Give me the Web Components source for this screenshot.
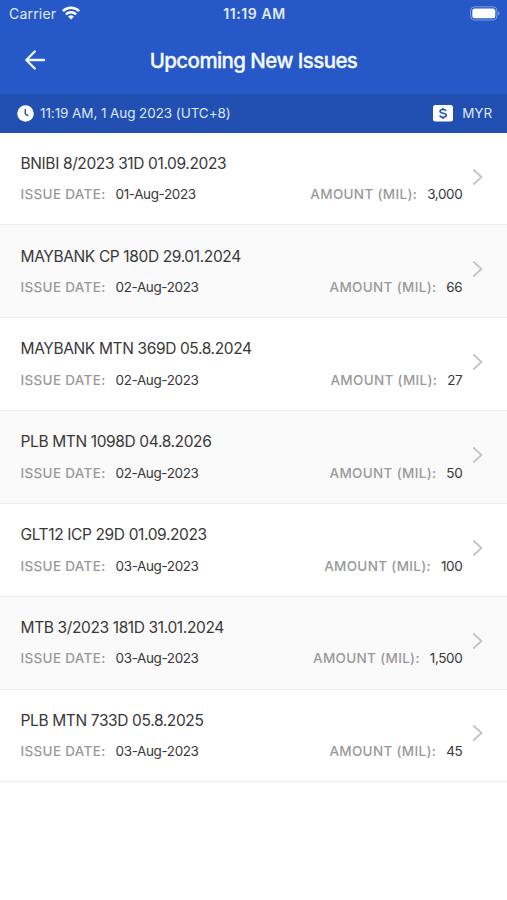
<!DOCTYPE html>
<html lang="en"><head><meta charset="utf-8"><title>Upcoming New Issues</title>
<style>html,body{margin:0;background:#fff}body{font-family:Inter,"Liberation Sans",sans-serif}</style></head>
<body><issues-app></issues-app>
<script>
const define=(name,html)=>{const t=document.createElement('template');t.innerHTML=html;
customElements.define(name,class extends HTMLElement{constructor(){super();this.attachShadow({mode:'open'}).append(t.content.cloneNode(true));}});};

define('status-bar',`<style>
:host{display:grid;grid-template-columns:1fr auto 1fr;align-items:center;height:27px;padding:0 7px 0 9px;box-sizing:border-box;color:#e0eafa;font-size:14px;letter-spacing:.2px}
.l{display:flex;align-items:center;gap:6px}.t{font-size:14px;font-weight:600;letter-spacing:.6px}.r{display:flex;justify-content:flex-end}svg{display:block}.l svg{margin-top:-2px}.r svg{margin-top:-1px}
</style><div class="l"><span>Carrier</span><svg width="18" height="14" viewBox="0 0 18 14"><g fill="none" stroke="#fff" stroke-width="2.5"><path d="M.9 5.1a11.5 11.5 0 0 1 16.2 0"/><path d="M3.9 8.3a7.2 7.2 0 0 1 10.2 0"/></g><path d="M9 13.6l-2.9-3a4.1 4.1 0 0 1 5.8 0z" fill="#fff"/></svg></div>
<span class="t">11:19 AM</span>
<div class="r"><svg width="30" height="15" viewBox="0 0 30 15"><rect x=".6" y=".8" width="26.4" height="13.2" rx="4" fill="none" stroke="#7f9de1" stroke-width="1"/><rect x="2.3" y="2.5" width="23" height="9.8" rx="2.5" fill="#fff"/><path d="M28.2 5.2q3 2.2 0 4.4z" fill="#7f9de1"/></svg></div>`);

define('nav-bar',`<style>
:host{display:grid;grid-template-columns:70px 1fr 70px;align-items:center;height:67px;color:#f6f9ff}
h1{margin:0;text-align:center;font-size:20.5px;font-weight:500;line-height:24px;letter-spacing:-.58px;-webkit-text-stroke:.3px #f6f9ff}svg{display:block;margin:-2px 0 0 24px}
</style><svg width="22" height="22" viewBox="0 0 22 22" fill="none" stroke="#f0f5ff" stroke-width="2.4" stroke-linecap="round" stroke-linejoin="round"><path d="M20 11H2.500M10.800 2.500L2.300 11l8.500 8.500"/></svg><h1><slot></slot></h1>`);

define('info-bar',`<style>
:host{display:flex;align-items:center;height:39px;box-sizing:border-box;padding:0 15px 1px 17px;background:#224fb2;color:#dce7fa;font-size:13.5px;letter-spacing:-.08px}
svg{display:block}.a{margin-left:6px}.b{margin-left:auto}.c{margin-left:9px}
</style><svg width="17" height="17" viewBox="0 0 17 17"><circle cx="8.5" cy="8.5" r="8.3" fill="#fff"/><path d="M8.3 3.9v5l3.1 2" fill="none" stroke="#224fb2" stroke-width="1.4"/></svg>
<span class="a"><slot></slot></span><svg class="b" width="20" height="17" viewBox="0 0 20 17"><rect width="20" height="16.6" rx="2.5" fill="#fff"/><path d="M13.1 5.9C12.700 4.900 11.600 4.400 10 4.400c-1.900 0-3 .7-3 1.900 0 2.900 6.300 1.100 6.300 4 0 1.200-1.200 2-3.200 2-1.800 0-3-.7-3.300-1.800M10 2.700v2M10 12v2" fill="none" stroke="#224fb2" stroke-width="1.500"/></svg><span class="c"><slot name="currency"></slot></span>`);

define('issue-row',`<style>
:host{display:grid;grid-template-columns:1fr 30px;align-items:center;height:92.840px;box-sizing:border-box;padding:0 14px 0 20.500px;border-bottom:1px solid #ececec;background:#fff;color:#383838}
:host(:nth-of-type(even)){background:#fafafa}
.t{font-size:15.500px;line-height:20px;white-space:nowrap;letter-spacing:-.37px}.m{display:flex;justify-content:space-between;margin-top:11.400px;padding-right:.700px;line-height:18px;font-size:13.500px;white-space:nowrap}
.k{color:#999;font-weight:500;letter-spacing:.32px}.v{margin-left:10px;letter-spacing:-.39px}svg{display:block;margin-left:9px;margin-top:-4px}
</style><div><div class="t"><slot></slot></div><div class="m"><div><span class="k">ISSUE DATE:</span><span class="v"><slot name="date"></slot></span></div><div><span class="k">AMOUNT (MIL):</span><span class="v"><slot name="amount"></slot></span></div></div></div>
<svg width="12" height="18" viewBox="0 0 12 18" fill="none" stroke="#c4c4c4" stroke-width="1.800"><path d="M1.300 1.500L9.500 9l-8.200 7.500"/></svg>`);

const rows=[['BNIBI 8/2023 31D 01.09.2023','01-Aug-2023','3,000'],['MAYBANK CP 180D 29.01.2024','02-Aug-2023','66'],['MAYBANK MTN 369D 05.8.2024','02-Aug-2023','27'],['PLB MTN 1098D 04.8.2026','02-Aug-2023','50'],['GLT12 ICP 29D 01.09.2023','03-Aug-2023','100'],['MTB 3/2023 181D 31.01.2024','03-Aug-2023','1,500'],['PLB MTN 733D 05.8.2025','03-Aug-2023','45']];
define('issues-app',`<style>:host{display:block;min-height:900px;background:#fff}header{background:#2659c7;height:132.600px}</style>
<header><status-bar></status-bar><nav-bar>Upcoming New Issues</nav-bar><info-bar>11:19 AM, 1 Aug 2023 (UTC+8)<span slot="currency">MYR</span></info-bar></header>
<main>${rows.map(r=>`<issue-row>${r[0]}<span slot="date">${r[1]}</span><span slot="amount">${r[2]}</span></issue-row>`).join('')}</main>`);
</script></body></html>
